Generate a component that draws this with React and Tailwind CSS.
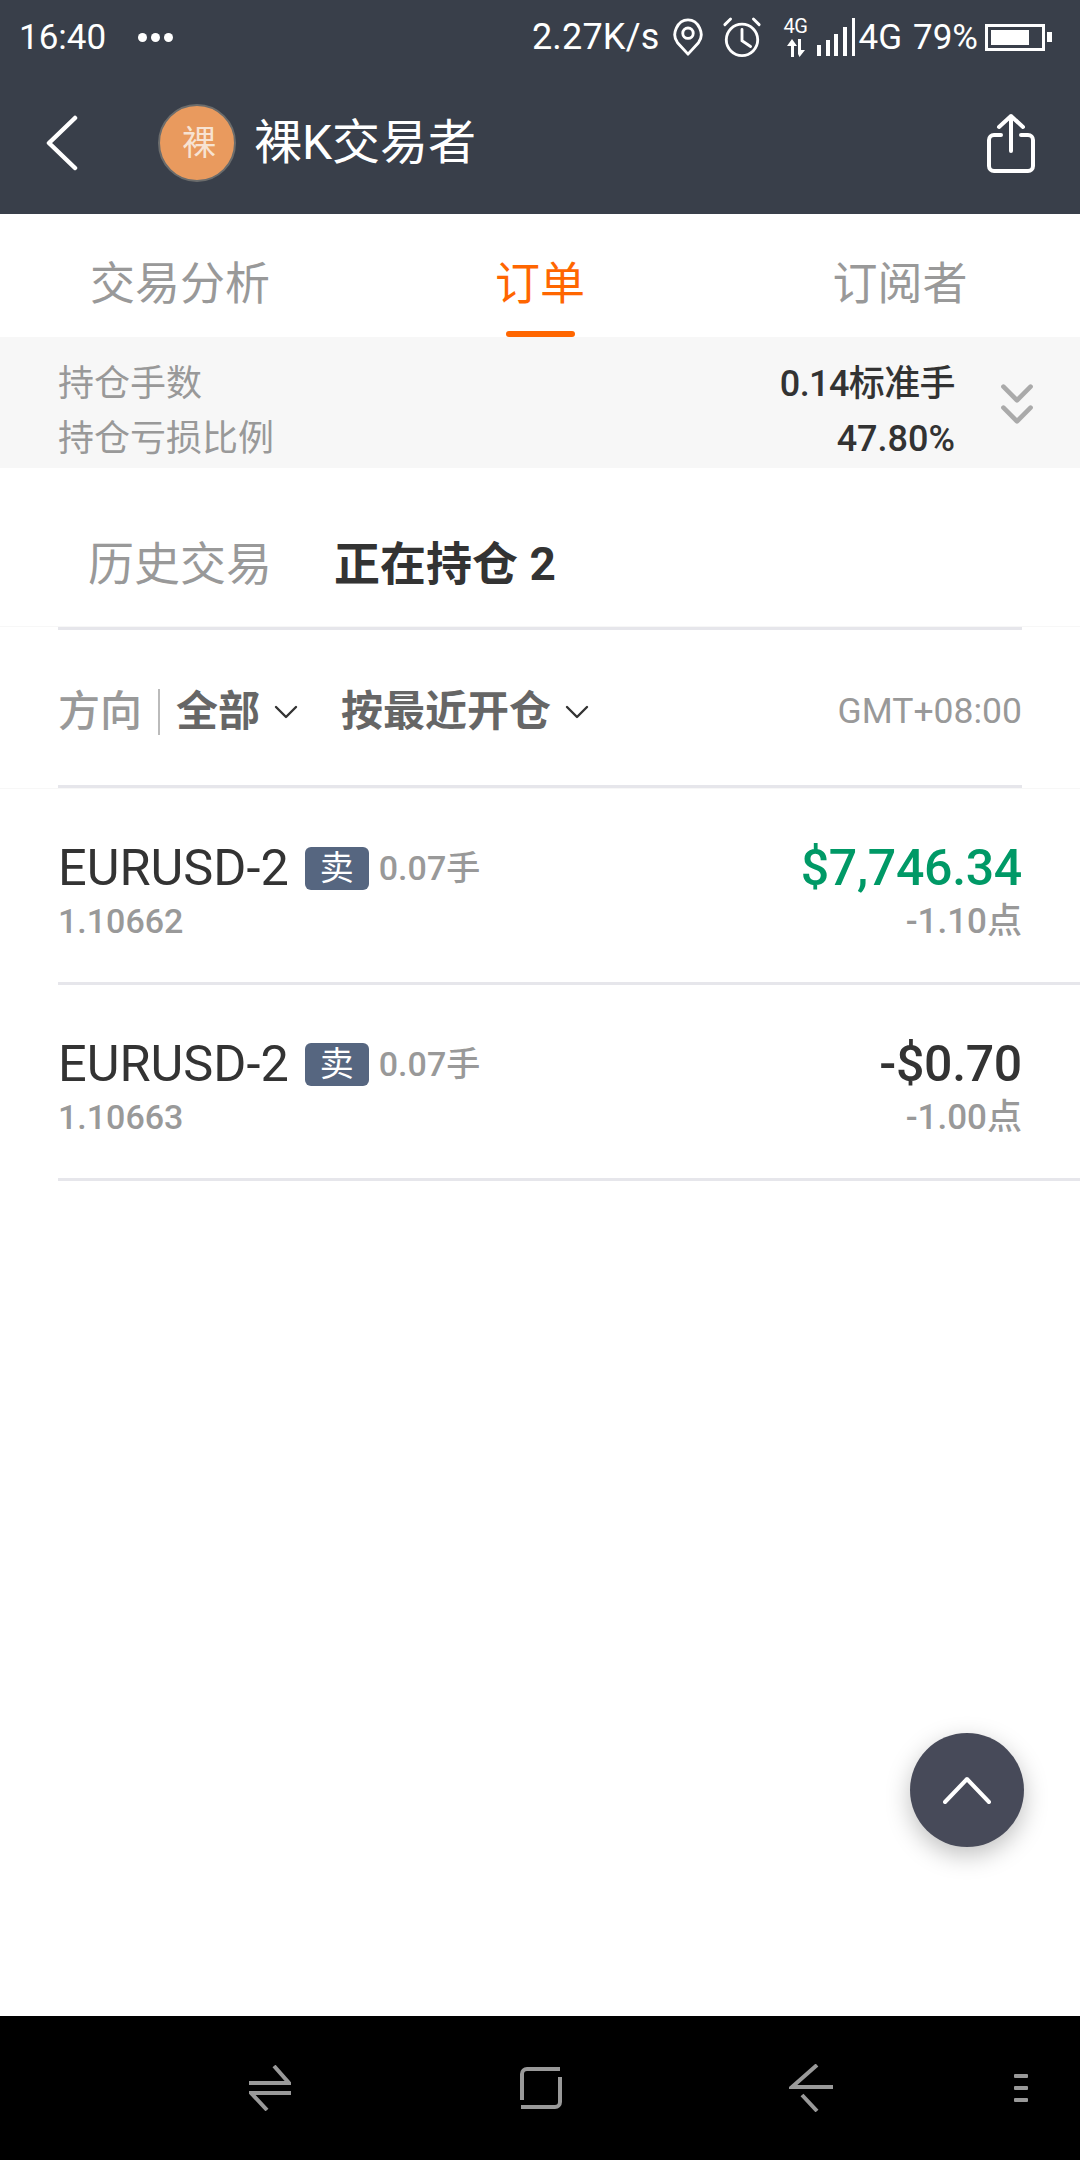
const FONT = { fontFamily: '"Roboto","Noto Sans CJK SC",sans-serif' };

function Chevron({ className, width = 2.4 }) {
  return (
    <svg className={className} viewBox="0 0 24 14" fill="none" stroke="currentColor" strokeWidth={width} strokeLinecap="round" strokeLinejoin="round">
      <path d="M2 2l10 10L22 2" />
    </svg>
  );
}

function StatusBar() {
  return (
    <div className="h-[74px] flex items-center pl-[19px] pr-[28px] text-white">
      <span className="text-[35px] leading-none">16:40</span>
      <span className="ml-[32px] flex gap-[4px]">
        <i className="w-[9px] h-[9px] rounded-full bg-white" />
        <i className="w-[9px] h-[9px] rounded-full bg-white" />
        <i className="w-[9px] h-[9px] rounded-full bg-white" />
      </span>
      <span className="ml-auto text-[36px] leading-none tracking-[0.2px]">2.27K/s</span>
      <svg className="ml-[11px] w-[34px] h-[40px]" viewBox="0 0 34 42" fill="none" stroke="white" strokeWidth="3">
        <path d="M17 39L6 27C-1 18 6 3 17 3s18 15 11 24z" strokeLinejoin="round" />
        <circle cx="17" cy="17" r="5.5" />
      </svg>
      <svg className="ml-[17px] w-[40px] h-[42px]" viewBox="0 0 42 44" fill="none" stroke="white" strokeWidth="3" strokeLinecap="round">
        <circle cx="21" cy="25" r="16.5" />
        <path d="M21 14v12l9 6M3 9l6-6M39 9l-6-6" />
      </svg>
      <div className="ml-[20px] w-[28px] h-[40px] flex flex-col items-center justify-between">
        <span className="text-[20px] leading-[18px] tracking-[-0.5px]">4G</span>
        <svg className="w-[18px] h-[18px]" viewBox="0 0 18 18" fill="white">
          <path d="M5 0l5 7H7v11H4V7H0zM11 0h3v11h4l-5.5 7L11 15z" />
        </svg>
      </div>
      <svg className="ml-[7px] w-[38px] h-[38px]" viewBox="0 0 38 38" fill="white">
        <rect x="0" y="27" width="4" height="11" />
        <rect x="9" y="22" width="4" height="16" />
        <rect x="17" y="16" width="4" height="22" />
        <rect x="26" y="9" width="4" height="29" />
        <rect x="35" y="0" width="3" height="38" />
      </svg>
      <span className="ml-[4px] text-[35px] leading-none">4G</span>
      <span className="ml-[11px] text-[35px] leading-none">79%</span>
      <div className="ml-[7px] flex items-center">
        <div className="w-[60px] h-[27px] border-[3px] border-white p-[3px] pr-[13px]">
          <div className="w-full h-full bg-white" />
        </div>
        <div className="ml-[2px] w-[5px] h-[10px] bg-white" />
      </div>
    </div>
  );
}

function NavBar() {
  return (
    <div className="h-[140px] flex items-center pl-[46px] pr-[45px] pb-[2px] text-white">
      <svg className="w-[32px] h-[56px]" viewBox="0 0 32 56" fill="none" stroke="white" strokeWidth="4.5" strokeLinecap="round" strokeLinejoin="round">
        <path d="M29 3L3 28l26 25" />
      </svg>
      <div className="ml-[80px] w-[78px] h-[78px] rounded-full bg-[#e99a5e] border-[2px] border-[#6b6c6c] flex items-center justify-center pl-[4px] text-[34px] text-[#f7e3d2]">
        裸
      </div>
      <span className="ml-[18px] text-[48px] leading-none">裸K交易者</span>
      <svg className="ml-auto w-[48px] h-[60px]" viewBox="0 0 48 60" fill="none" stroke="white" strokeWidth="4" strokeLinecap="round" strokeLinejoin="round">
        <path d="M14 22H7a5 5 0 0 0-5 5v26a5 5 0 0 0 5 5h34a5 5 0 0 0 5-5V27a5 5 0 0 0-5-5h-7" />
        <path d="M24 38V3M12 14L24 3l12 11" />
      </svg>
    </div>
  );
}

function Tabs() {
  return (
    <div className="h-[123px] grid grid-cols-3 text-[45px] text-[#999999] bg-white">
      <div className="flex justify-center pt-[39px] leading-[64px]">交易分析</div>
      <div className="relative flex justify-center pt-[39px] leading-[64px] text-[#ff6600]">
        订单
        <div className="absolute bottom-0 left-[146px] w-[69px] h-[6px] rounded-[3px] bg-[#ff6600]" />
      </div>
      <div className="flex justify-center pt-[39px] leading-[64px]">订阅者</div>
    </div>
  );
}

function Summary() {
  return (
    <div className="h-[131px] bg-[#f7f7f7] flex items-center pl-[58px] pr-[46px] pt-[18px]">
      <div className="text-[36px] leading-[55px] text-[#999999]">
        <div>持仓手数</div>
        <div>持仓亏损比例</div>
      </div>
      <div className="ml-auto text-right text-[36px] leading-[55px] font-medium text-[#333333]">
        <div className="tracking-[-0.6px]">0.14标准手</div>
        <div>47.80%</div>
      </div>
      <div className="ml-[45px] mb-[16px] flex flex-col gap-[2px] text-[#aaaaaa]">
        <Chevron className="w-[34px] h-[19px]" width={3.4} />
        <Chevron className="w-[34px] h-[19px]" width={3.4} />
      </div>
    </div>
  );
}

function SubTabs() {
  return (
    <div className="h-[159px] pl-[88px] pt-[58px] flex items-start text-[46px] leading-[76px] border-b border-[#f7f7f7]">
      <span className="text-[#999999]">历史交易</span>
      <span className="ml-[62px] font-bold text-[#333333]">正在持仓 2</span>
    </div>
  );
}

function Filters() {
  return (
    <div className="border-b border-[#f7f7f7]">
      <div className="mx-[58px] h-[161px] border-y-[3px] border-[#e6e6eb] flex items-center pt-[8px]">
        <span className="text-[42px] font-medium text-[#999999]">方向</span>
        <span className="mx-[16px] w-[2px] h-[46px] bg-[#bbbbbb]" />
        <span className="text-[42px] font-bold text-[#666666]">全部</span>
        <Chevron className="ml-[14px] w-[24px] h-[14px] text-[#333333]" />
        <span className="ml-[43px] text-[42px] font-bold text-[#666666]">按最近开仓</span>
        <Chevron className="ml-[14px] w-[24px] h-[14px] text-[#333333]" />
        <span className="ml-auto text-[35.5px] text-[#999999]">GMT+08:00</span>
      </div>
    </div>
  );
}

function Row({ price, value, valueClass, points }) {
  return (
    <div className="ml-[58px] h-[196px] border-b-[3px] border-[#e6e6eb] pr-[58px] pt-[51px]">
      <div className="flex items-center h-[56px]">
        <span className="text-[50.5px] leading-none text-[#333333]">EURUSD-2</span>
        <span className="ml-[16px] w-[64px] h-[43px] rounded-[6px] bg-[#566680] flex items-center justify-center text-[34px] leading-none text-white">卖</span>
        <span className="ml-[10px] text-[34px] font-medium leading-none text-[#999999]">0.07手</span>
        <span className={`ml-auto text-[50px] leading-none font-medium tracking-[-0.3px] ${valueClass}`}>{value}</span>
      </div>
      <div className="flex items-center justify-between h-[50px] text-[34px] font-medium leading-none text-[#999999]">
        <span>{price}</span>
        <span className="text-[35px]">{points}</span>
      </div>
    </div>
  );
}

function SystemBar() {
  return (
    <div className="h-[144px] bg-black flex items-center pl-[249px] pr-[52px]">
      <svg className="w-[42px] h-[46px]" viewBox="0 0 42 46" fill="none" stroke="#999999" strokeWidth="4">
        <path d="M0 18h40L25 1M42 28H2l16 17" />
      </svg>
      <svg className="ml-[229px] w-[42px] h-[42px]" viewBox="0 0 42 42" fill="none" stroke="#999999" strokeWidth="4">
        <path d="M2 33V7a5 5 0 0 1 5-5h33M40 10v25a5 5 0 0 1-5 5H1" />
      </svg>
      <svg className="ml-[227px] w-[44px] h-[48px]" viewBox="0 0 44 48" fill="none" stroke="#999999" strokeWidth="4">
        <path d="M28 1L3 23h41M13 31l15 16" />
      </svg>
      <div className="ml-auto flex flex-col gap-[8px]">
        <i className="w-[14px] h-[4px] rounded-[1px] bg-[#999999]" />
        <i className="w-[14px] h-[4px] rounded-[1px] bg-[#999999]" />
        <i className="w-[14px] h-[4px] rounded-[1px] bg-[#999999]" />
      </div>
    </div>
  );
}

export default function App() {
  return (
    <div className="relative w-[1080px] h-[2160px] bg-white flex flex-col overflow-hidden" style={FONT}>
      <div className="bg-[#393f4a]">
        <StatusBar />
        <NavBar />
      </div>
      <Tabs />
      <Summary />
      <SubTabs />
      <Filters />
      <Row price="1.10662" value="$7,746.34" valueClass="text-[#009966]" points="-1.10点" />
      <Row price="1.10663" value="-$0.70" valueClass="text-[#333333]" points="-1.00点" />
      <div className="flex-1" />
      <SystemBar />
      <div className="absolute left-[910px] top-[1733px] w-[114px] h-[114px] rounded-full bg-[#474a59] shadow-[0_8px_24px_rgba(0,0,0,0.25)] flex items-center justify-center">
        <svg className="w-[48px] h-[28px]" viewBox="0 0 48 28" fill="none" stroke="white" strokeWidth="4" strokeLinecap="round" strokeLinejoin="round">
          <path d="M2 26L24 3l22 23" />
        </svg>
      </div>
    </div>
  );
}
